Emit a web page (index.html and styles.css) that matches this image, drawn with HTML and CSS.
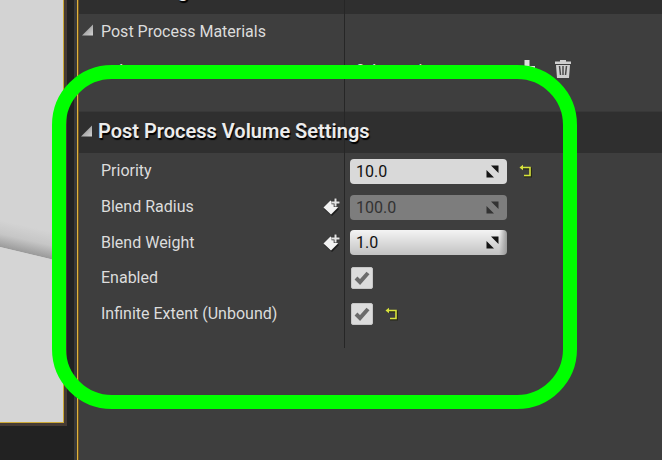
FILE: index.html
```html
<!DOCTYPE html>
<html lang="en">
<head>
<meta charset="utf-8">
<title>Post Process Volume Settings</title>
<link rel="stylesheet" href="styles.css">
</head>
<body>
<svg class="defs" aria-hidden="true">
  <defs>
    <linearGradient id="metal" x1="0" y1="0" x2="1" y2="1"><stop offset="0.3" stop-color="#999"/><stop offset="1" stop-color="#d2d2d2"/></linearGradient>
    <symbol id="arrow" viewBox="0 0 12 12"><path d="M11 0.5V11.5H0Z" fill="url(#metal)"/></symbol>
    <symbol id="spin" viewBox="0 0 13 13"><path d="M5 0.5H12.5V8ZM0.5 5L8 12.5H0.5Z" fill="currentColor"/></symbol>
    <symbol id="reset" viewBox="0 0 14 14"><path d="M3 4.500H12V12.500H5" fill="none" stroke="#262817" stroke-width="2"/><path d="M2 3.500H11V11.500H5" fill="none" stroke="#d8e33c" stroke-width="1.600"/><path d="M0.500 3.500L4 0.800V6.200Z" fill="#d8e33c"/></symbol>
    <symbol id="key" viewBox="0 0 18 18"><path d="M1 11L8 4L16 11L9 18Z" fill="#1c1c1c"/><path d="M0.500 9.500L7.500 2.500L15 9.500L8 16.500Z" fill="#f2f2f2"/><path d="M12.500 0V9M8.500 4.500H17" stroke="#303030" stroke-width="3.600"/><path d="M12.500 0.500V8.500M8.500 4.500H16.500" stroke="#e4e4e4" stroke-width="2"/></symbol>
  </defs>
</svg>
<div class="editor">
  <div class="side">
    <div class="viewport">
      <svg class="scene" viewBox="0 0 63 422" preserveAspectRatio="none" aria-hidden="true">
        <defs>
          <linearGradient id="shade" gradientUnits="userSpaceOnUse" x1="39" y1="229" x2="33" y2="255"><stop offset="0" stop-color="#d3d3d3"/><stop offset="0.5" stop-color="#c6c6c6"/><stop offset="1" stop-color="#999"/></linearGradient>
        </defs>
        <path d="M0 0H63V262L0 247Z" fill="url(#shade)"/>
        <path d="M0 247L63 262V422H0Z" fill="#d5d5d5"/>
      </svg>
    </div>
  </div>
  <main class="details">
    <section>
      <h2 class="heading heading-cut">Rendering Features</h2>
      <div class="row materials">
        <svg class="arrow" aria-hidden="true"><use href="#arrow"/></svg>
        <h3 class="label">Post Process Materials</h3>
      </div>
      <div class="row array">
        <span class="label nested">Array</span>
        <div class="value">
          <span class="count">0 Array elements</span>
          <button class="tool" aria-label="Add element"><svg width="18" height="18" viewBox="0 0 18 18"><path d="M6.500 0H11.500V6H17V11H11.500V17H6.500V11H1V6H6.500Z" fill="#ddd"/></svg></button>
          <button class="tool" aria-label="Remove all elements"><svg width="18" height="20" viewBox="0 0 18 20"><path d="M1 2.500H6V1H12V2.500H17V5H1ZM2 6H16L15 19H3Z" fill="#d0d0d0"/><path d="M5.500 7L6.500 16M9 7V16M12.500 7L11.500 16" stroke="#4b4b4b" stroke-width="1.500"/></svg></button>
        </div>
      </div>
    </section>
    <section>
      <h2 class="heading"><svg class="arrow" aria-hidden="true"><use href="#arrow"/></svg><span class="title">Post Process Volume Settings</span></h2>
      <div class="rows">
        <div class="row">
          <label class="label" for="priority">Priority</label>
          <div class="value">
            <span class="field"><input class="number" id="priority" type="text" value="10.0"><svg class="spin" aria-hidden="true"><use href="#spin"/></svg></span>
            <button class="reset" aria-label="Reset priority"><svg><use href="#reset"/></svg></button>
          </div>
        </div>
        <div class="row">
          <label class="label" for="radius">Blend Radius</label>
          <button class="key" aria-label="Key blend radius"><svg><use href="#key"/></svg></button>
          <div class="value"><span class="field"><input class="number" id="radius" type="text" value="100.0" disabled><svg class="spin" aria-hidden="true"><use href="#spin"/></svg></span></div>
        </div>
        <div class="row short">
          <label class="label" for="weight">Blend Weight</label>
          <button class="key" aria-label="Key blend weight"><svg><use href="#key"/></svg></button>
          <div class="value"><span class="field"><input class="number slider" id="weight" type="text" value="1.0"><svg class="spin" aria-hidden="true"><use href="#spin"/></svg></span></div>
        </div>
        <div class="row">
          <label class="label" for="enabled">Enabled</label>
          <div class="value"><span class="tick"><input id="enabled" type="checkbox" checked><svg viewBox="0 0 16 14" aria-hidden="true"><path d="M2 7L6 11L14 2" /></svg></span></div>
        </div>
        <div class="row short">
          <label class="label" for="unbound">Infinite Extent (Unbound)</label>
          <div class="value"><span class="tick"><input id="unbound" type="checkbox" checked><svg viewBox="0 0 16 14" aria-hidden="true"><path d="M2 7L6 11L14 2" /></svg></span>
            <button class="reset" aria-label="Reset infinite extent"><svg><use href="#reset"/></svg></button>
          </div>
        </div>
      </div>
    </section>
  </main>
  <div class="highlight"></div>
</div>
</body>
</html>
```
FILE: styles.css
```css
* { box-sizing: border-box; }
body {
  margin: 0;
  background: #3e3e3e;
  color: #dcdcdc;
  font: 16px/20px Roboto, "Liberation Sans", sans-serif;
}
h2, h3 { margin: 0; font-weight: 400; font-size: inherit; }
button { padding: 0; border: 0; background: none; display: flex; }
.defs { position: absolute; width: 0; height: 0; }

.editor {
  position: relative;
  display: flex;
  min-height: 100vh;
  overflow: hidden;
}
.side {
  width: 74px;
  flex: none;
  background: #222;
  padding: 0 7px 35px 0;
  display: flex;
}
.viewport {
  flex: 1;
  display: flex;
  background: #d3d3d3;
  border: solid #463b34;
  border-width: 0 3px 3px 0;
}
.scene {
  flex: 1;
  min-width: 0;
  height: 100%;
  border: solid #cda936;
  border-width: 0 1px 1px 0;
}

.details {
  position: relative;
  flex: 1;
  min-width: 0;
  border-left: 3px solid #393939;
  box-shadow: inset 1px 0 #e0b33c, inset 2px 0 #70521a;
}
.details::after {
  content: "";
  position: absolute;
  left: 267px;
  top: 0;
  height: 348px;
  border-left: 1px solid #262626;
}
.heading {
  display: flex;
  align-items: center;
  gap: 5px;
  height: 42px;
  margin-left: 2px;
  padding: 0 0 3px 2px;
  background: #2f2f2f;
  border-top: 1px solid #383838;
  color: #ececec;
  font-size: 20px;
  font-weight: 600;
  line-height: 24px;
  text-shadow: 1px 2px 1px #000;
}
.title { position: relative; z-index: 1; }
.heading-cut {
  height: 14px;
  align-items: flex-end;
  padding: 0 0 12px 18px;
  border-top: 0;
}
.arrow { width: 12px; height: 12px; flex: none; }

.row {
  display: grid;
  grid-template-columns: 225px 24px 1fr;
  align-items: center;
  height: 36px;
  padding-left: 24px;
}
.short { height: 35px; }
.nested { padding-left: 15px; }
.materials {
  display: flex;
  gap: 7px;
  padding-left: 5px;
}
.materials .arrow { margin-bottom: 4px; }
.array { height: 61px; padding-bottom: 20px; }
.value {
  grid-column: 3;
  grid-row: 1;
  display: flex;
  align-items: center;
}
.key { margin-left: -3px; }
.key svg { width: 18px; height: 18px; }

.field { position: relative; display: flex; }
.number {
  width: 157px;
  height: 25px;
  padding: 0 24px 0 6px;
  border: 0;
  border-radius: 4px;
  background: #d9d9d9;
  color: #111;
  font: inherit;
}
.number:disabled { background: #7d7d7d; color: #333; }
.slider { background: linear-gradient(90deg, transparent 95%, #999), linear-gradient(#f4f4f4, #c2c2c2); }
.spin {
  position: absolute;
  right: 8px;
  top: 6px;
  width: 13px;
  height: 13px;
  color: #151515;
}
.number:disabled + .spin { color: #333; }
.reset { margin-left: 12px; }
.reset svg { width: 14px; height: 14px; }

.tick { position: relative; display: flex; margin-left: 1px; }
.tick input {
  appearance: none;
  width: 22px;
  height: 22px;
  margin: 0;
  border: 1px solid #c6c6c6;
  border-radius: 2px;
  background: #dcdcdc;
}
.tick svg {
  position: absolute;
  inset: 4px 3px;
  width: 16px;
  height: 14px;
  fill: none;
  stroke: #6b6b6b;
  stroke-width: 4;
  pointer-events: none;
}
.count { width: 168px; padding-left: 6px; }
.tool { width: 18px; margin: 0 18px 4px 0; }

.highlight {
  position: absolute;
  z-index: 2;
  left: 52px;
  top: 65px;
  width: 525px;
  height: 344px;
  border: 14px solid #0f0;
  border-radius: 60px;
  pointer-events: none;
}
```
